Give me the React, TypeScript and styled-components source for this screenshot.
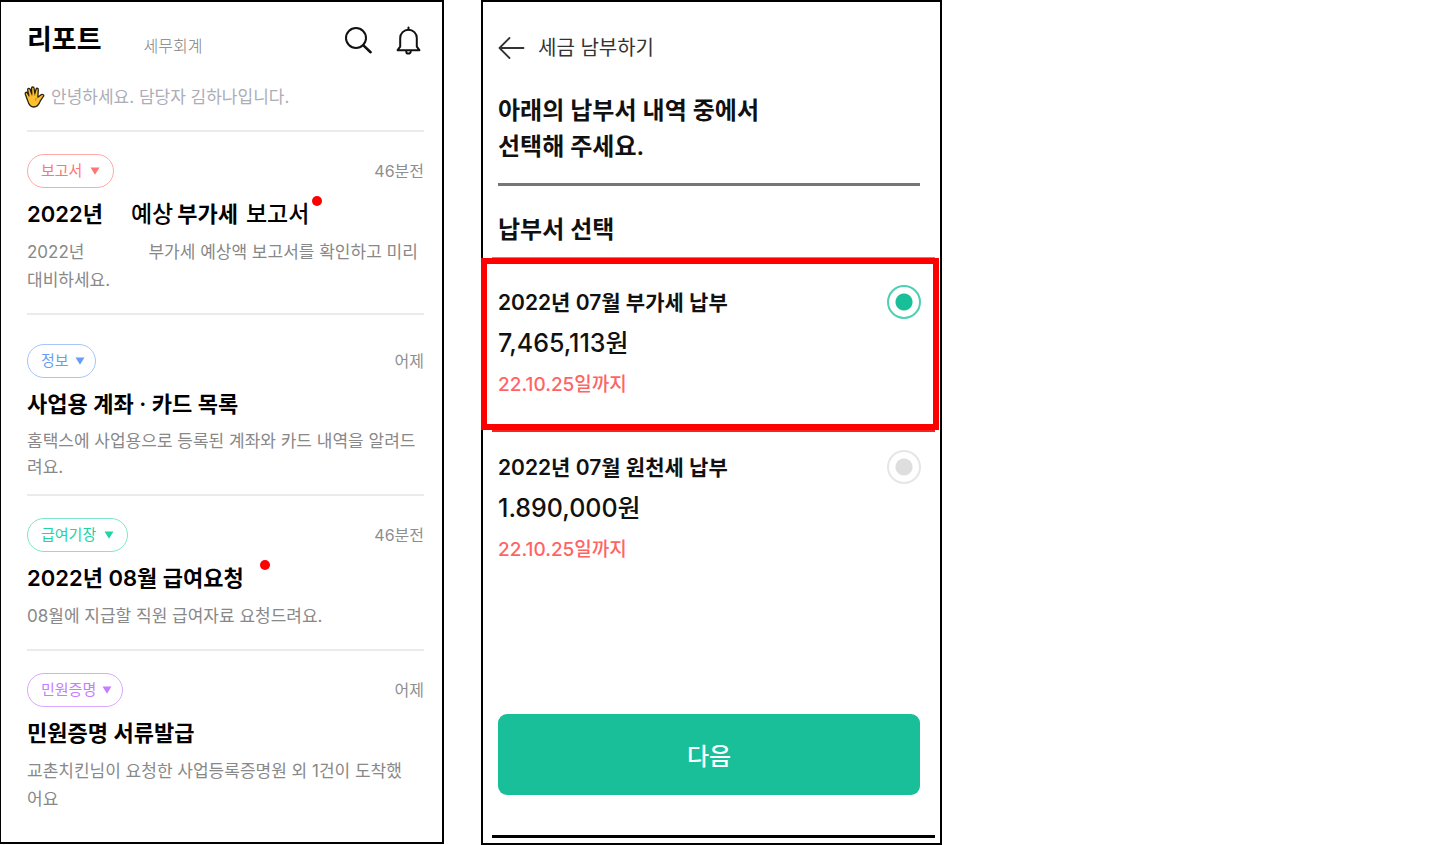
import React from "react";
import styled, { createGlobalStyle } from "styled-components";

const GlobalStyle = createGlobalStyle`
  *, *::before, *::after { box-sizing: border-box; }
  body {
    margin: 0;
    background: #fff;
    color: #111;
    font-family: Inter, "Noto Sans CJK KR", sans-serif;
  }
  h1, h2, h3, p, ul { margin: 0; padding: 0; }
  ul { list-style: none; }
  button { font-family: inherit; cursor: pointer; }
`;

const Page = styled.main`
  display: grid;
  grid-template-columns: minmax(0, 444fr) minmax(0, 461fr) minmax(0, 460fr);
  column-gap: 37px;
  align-items: start;
`;

const Screen = styled.section`
  border: 2px solid #000;
  background: #fff;
`;

const ReportScreen = styled(Screen)`
  border-left-width: 1px;
  padding: 20px 18px 10px 26px;
`;

const TopBar = styled.header`
  display: flex;
  align-items: center;
  height: 36px;
`;

const AppTitle = styled.h1`
  font-size: 27px;
  line-height: 36px;
  font-weight: 700;
  color: #000;
`;

const Office = styled.span`
  margin: 12px auto 0 42px;
  font-size: 16px;
  line-height: 24px;
  font-weight: 300;
  color: #808080;
`;

const IconButton = styled.button`
  display: flex;
  padding: 0;
  border: 0;
  background: none;
  color: #111;
`;

const TopActions = styled.div`
  display: flex;
  align-items: center;
  gap: 23px;
  padding-right: 3px;
`;

const Greeting = styled.p`
  display: flex;
  align-items: center;
  gap: 6px;
  margin: 25px 0 19px -3px;
  font-size: 17px;
  line-height: 28px;
  color: #acadb6;
`;

const Card = styled.li<{ $roomy?: boolean }>`
  border-top: 2px solid #ebebeb;
  padding: ${(p) => (p.$roomy ? "29px 0 14px" : "22px 0 19px")};
`;

const CardTop = styled.div`
  display: flex;
  align-items: center;
  justify-content: space-between;
`;

const Chip = styled.button<{ $color: string; $line: string; $snug?: boolean }>`
  display: flex;
  align-items: center;
  gap: ${(p) => (p.$snug ? 6 : 8)}px;
  height: 34px;
  padding: 0 ${(p) => (p.$snug ? 10 : 13)}px 0 13px;
  border: 1px solid ${(p) => p.$line};
  border-radius: 17px;
  background: #fff;
  color: ${(p) => p.$color};
  font-size: 15px;
  line-height: 20px;
`;

const Time = styled.span`
  font-size: 16px;
  line-height: 24px;
  color: #8e8e8e;
`;

const CardTitle = styled.h2`
  position: relative;
  display: inline-flex;
  margin-top: 12px;
  font-size: 22px;
  line-height: 28px;
  font-weight: 600;
  color: #000;
  white-space: nowrap;
`;

const Spaced = styled.span<{ $gap: number }>`
  margin-left: ${(p) => p.$gap}px;
`;

const LooseWord = styled(Spaced)`
  font-size: 23px;
  font-weight: 500;
`;

const NewDot = styled.i<{ $far?: boolean }>`
  position: absolute;
  top: -4px;
  right: ${(p) => (p.$far ? "-26px" : "-13px")};
  width: 10px;
  height: 10px;
  border-radius: 50%;
  background: #f00;
`;

const Description = styled.p<{ $tight?: boolean }>`
  margin-top: 10px;
  font-size: 17px;
  line-height: ${(p) => (p.$tight ? 26 : 28)}px;
  color: #888;
  white-space: nowrap;
`;

const PayScreen = styled(Screen)`
  padding: 28px 5px 5px 9px;
`;

const PayBody = styled.div`
  padding: 0 15px 0 6px;
`;

const PayHeader = styled.header`
  display: flex;
  align-items: center;
  gap: 13px;
`;

const PayTitle = styled.span`
  font-size: 20px;
  line-height: 36px;
  color: #333;
`;

const Question = styled.h1`
  margin-top: 27px;
  padding-bottom: 18px;
  border-bottom: 3px solid #767676;
  font-size: 24px;
  line-height: 36px;
  font-weight: 600;
`;

const ListTitle = styled.h2`
  margin: 26px 0 10px;
  font-size: 24px;
  line-height: 36px;
  font-weight: 600;
`;

const Options = styled.div`
  margin: 0 -4px 0 -11px;
`;

const Option = styled.label<{ $picked?: boolean }>`
  position: relative;
  z-index: ${(p) => (p.$picked ? 1 : 0)};
  display: flex;
  align-items: flex-start;
  justify-content: space-between;
  border: 6px solid ${(p) => (p.$picked ? "#f00" : "transparent")};
  padding: 21px 12px 21px 11px;
  cursor: pointer;

  & + & {
    margin-top: -7px;
  }

  &::before,
  &::after {
    content: ${(p) => (p.$picked ? '""' : "none")};
    position: absolute;
    left: 5px;
    right: -2px;
  }
  &::before {
    top: -7px;
    height: 1px;
    background: #f66;
  }
  &::after {
    bottom: -8px;
    height: 2px;
    background: #f22;
  }
`;

const OptionText = styled.span`
  display: flex;
  flex-direction: column;
`;

const OptionName = styled.span`
  font-size: 21px;
  line-height: 36px;
  font-weight: 600;
`;

const Amount = styled.span`
  margin-top: 2px;
  font-size: 25px;
  line-height: 40px;
  font-weight: 500;
`;

const Due = styled.span`
  margin-top: 4px;
  font-size: 19px;
  line-height: 36px;
  font-weight: 500;
  color: #ff6464;
`;

const Radio = styled.input`
  appearance: none;
  flex: none;
  width: 34px;
  height: 34px;
  margin: 0;
  border: 2px solid #e6e6e6;
  border-radius: 50%;
  background: radial-gradient(circle, #dedede 8px, transparent 9px);

  &:checked {
    border-color: #4fcfb2;
    background: radial-gradient(circle, #19bf99 8px, transparent 9px);
  }
`;

const NextButton = styled.button`
  display: block;
  width: 100%;
  height: 81px;
  margin: 119px 0 40px;
  border: 0;
  border-radius: 9px;
  background: #19bf99;
  color: #fff;
  font-size: 24px;
  font-weight: 500;
`;

const BottomLine = styled.hr`
  height: 3px;
  margin: 0;
  border: 0;
  background: #000;
`;

const SearchIcon = () => (
  <svg width="29" height="29" viewBox="0 0 29 29" fill="none" stroke="currentColor" strokeWidth="2" strokeLinecap="round" aria-hidden="true">
    <circle cx="12" cy="12" r="10" />
    <path d="M19.4 19.4 26.6 26.2" strokeWidth="2.6" />
  </svg>
);

const BellIcon = () => (
  <svg width="25" height="29" viewBox="0 0 25 29" fill="none" stroke="currentColor" strokeWidth="2" strokeLinecap="round" strokeLinejoin="round" aria-hidden="true">
    <path d="M12.5 1.4v2" />
    <path d="M1.6 24.2h21.8L20.8 20.6V12a8.3 8.3 0 0 0-16.6 0v8.6Z" />
    <path d="M10.3 25.4a2.2 2.2 0 0 0 4.4 0" />
  </svg>
);

const BackIcon = () => (
  <svg width="27" height="24" viewBox="0 0 27 24" fill="none" stroke="#333" strokeWidth="1.8" strokeLinecap="round" strokeLinejoin="round" aria-hidden="true">
    <path d="M25.5 12H1.5M11.5 2 1.5 12l10 10" />
  </svg>
);

const HandIcon = () => (
  <svg width="21" height="22" viewBox="0 0 21 22" fill="#fdc02f" stroke="#2b2213" strokeWidth="1.3" strokeLinejoin="round" aria-hidden="true">
    <path d="M3.6 14.4 1.3 8.2C.7 6.4 2.8 5.5 3.6 7.1L4.9 9.6 3.7 4.2C3.3 2.3 5.6 1.7 6.2 3.5L7.8 8.2 7.5 2.5C7.5.6 9.9.5 10.1 2.3L10.8 7.7 12 3.3C12.6 1.6 14.6 2.2 14.3 4L13.8 11.2 16.8 8.9C18.6 7.7 20.7 9 19.3 10.5L16.2 15.2C14.7 19 12.9 21 9.8 21 6.4 21 4.6 18.2 3.6 14.4Z" />
    <path d="M4.9 9.6 5.3 11M7.8 8.2 8 10.2M10.8 7.7 10.8 10M13.8 11.2C12.4 11.8 11.6 13 11.6 14.6" fill="none" stroke="#a87412" strokeWidth=".8" />
  </svg>
);

const Caret = () => (
  <svg width="10" height="8" viewBox="0 0 10 8" fill="currentColor" aria-hidden="true">
    <path d="M.5.5h9L5 7.8Z" />
  </svg>
);

export default function App() {
  const [picked, setPicked] = React.useState("vat");
  const bills = [
    { id: "vat", name: "2022년 07월 부가세 납부", amount: "7,465,113원", due: "22.10.25일까지" },
    { id: "withholding", name: "2022년 07월 원천세 납부", amount: "1.890,000원", due: "22.10.25일까지" },
  ];

  return (
    <>
      <GlobalStyle />
      <Page>
        <ReportScreen>
          <TopBar>
            <AppTitle>리포트</AppTitle>
            <Office>세무회계</Office>
            <TopActions>
              <IconButton aria-label="검색"><SearchIcon /></IconButton>
              <IconButton aria-label="알림"><BellIcon /></IconButton>
            </TopActions>
          </TopBar>
          <Greeting>
            <HandIcon />
            안녕하세요. 담당자 김하나입니다.
          </Greeting>
          <ul>
            <Card>
              <CardTop>
                <Chip $color="#ff7474" $line="#ffa8a8">보고서<Caret /></Chip>
                <Time>46분전</Time>
              </CardTop>
              <CardTitle>
                <span>2022년</span>
                <LooseWord $gap={28}>예상</LooseWord>
                <Spaced $gap={4}>부가세</Spaced>
                <LooseWord $gap={8}>보고서</LooseWord>
                <NewDot />
              </CardTitle>
              <Description>
                2022년<Spaced $gap={64}>부가세 예상액 보고서를 확인하고 미리</Spaced>
                <br />
                대비하세요.
              </Description>
            </Card>
            <Card $roomy>
              <CardTop>
                <Chip $color="#659ff5" $line="#a3c6fb" $snug>정보<Caret /></Chip>
                <Time>어제</Time>
              </CardTop>
              <CardTitle>사업용 계좌 · 카드 목록</CardTitle>
              <Description $tight>
                홈택스에 사업용으로 등록된 계좌와 카드 내역을 알려드
                <br />
                려요.
              </Description>
            </Card>
            <Card>
              <CardTop>
                <Chip $color="#22d3a5" $line="#7fe6cb">급여기장<Caret /></Chip>
                <Time>46분전</Time>
              </CardTop>
              <CardTitle>2022년 08월 급여요청<NewDot $far /></CardTitle>
              <Description>08월에 지급할 직원 급여자료 요청드려요.</Description>
            </Card>
            <Card>
              <CardTop>
                <Chip $color="#c77dff" $line="#d9a8ff" $snug>민원증명<Caret /></Chip>
                <Time>어제</Time>
              </CardTop>
              <CardTitle>민원증명 서류발급</CardTitle>
              <Description>
                교촌치킨님이 요청한 사업등록증명원 외 1건이 도착했
                <br />
                어요
              </Description>
            </Card>
          </ul>
        </ReportScreen>

        <PayScreen>
          <PayBody>
            <PayHeader>
              <IconButton aria-label="뒤로"><BackIcon /></IconButton>
              <PayTitle>세금 남부하기</PayTitle>
            </PayHeader>
            <Question>
              아래의 납부서 내역 중에서
              <br />
              선택해 주세요.
            </Question>
            <ListTitle>납부서 선택</ListTitle>
          </PayBody>
          <Options>
            {bills.map((bill) => (
              <Option key={bill.id} $picked={picked === bill.id}>
                <OptionText>
                  <OptionName>{bill.name}</OptionName>
                  <Amount>{bill.amount}</Amount>
                  <Due>{bill.due}</Due>
                </OptionText>
                <Radio
                  type="radio"
                  name="bill"
                  value={bill.id}
                  checked={picked === bill.id}
                  onChange={() => setPicked(bill.id)}
                />
              </Option>
            ))}
          </Options>
          <PayBody>
            <NextButton type="button">다음</NextButton>
          </PayBody>
          <BottomLine />
        </PayScreen>
      </Page>
    </>
  );
}
